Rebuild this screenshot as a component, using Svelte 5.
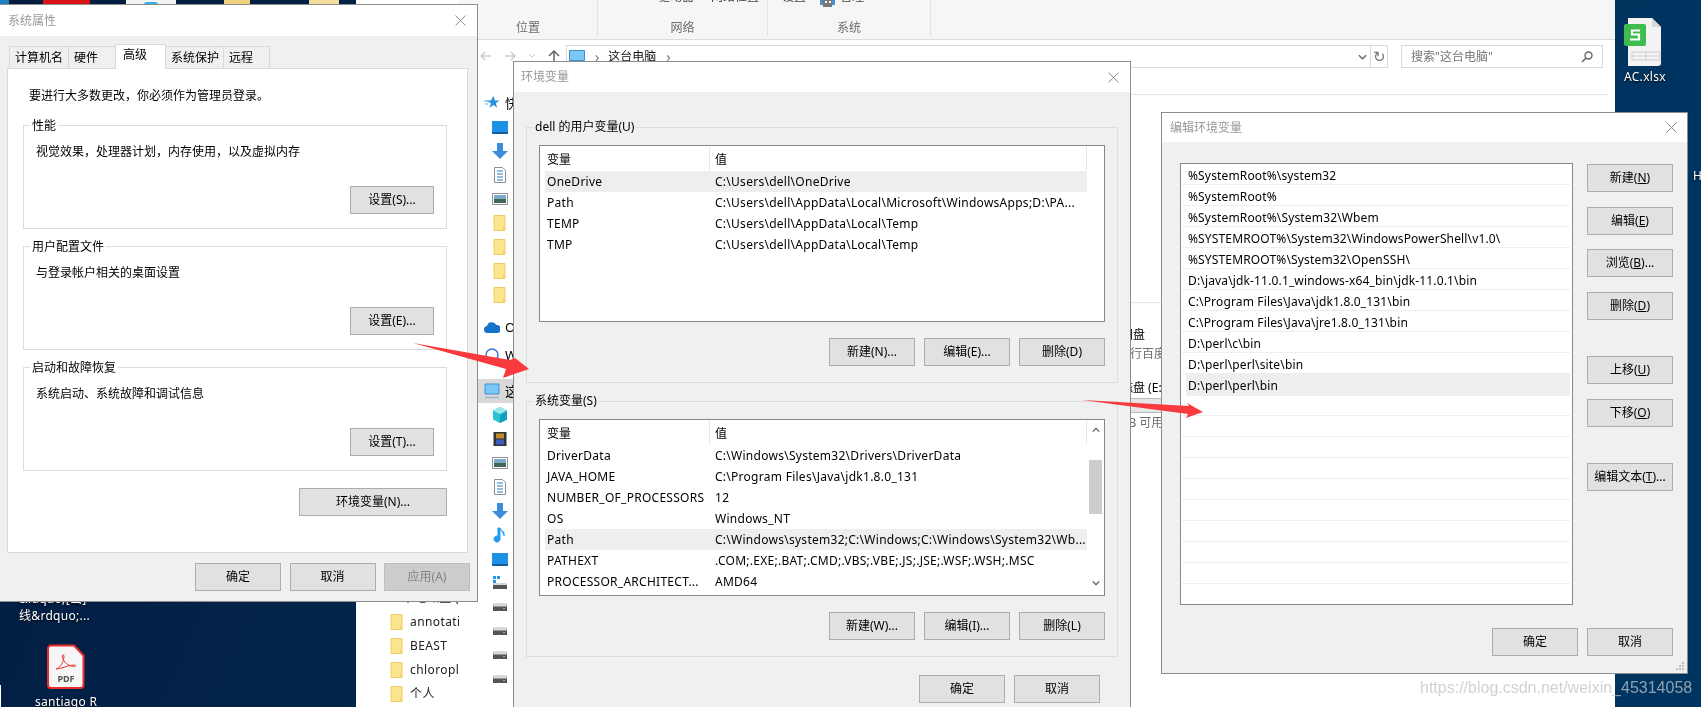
<script>
  const tabs = ['计算机名', '硬件', '高级', '系统保护', '远程'];
  const groups = [
    { legend: '性能', text: '视觉效果，处理器计划，内存使用，以及虚拟内存', btn: '设置(S)...' },
    { legend: '用户配置文件', text: '与登录帐户相关的桌面设置', btn: '设置(E)...' },
    { legend: '启动和故障恢复', text: '系统启动、系统故障和调试信息', btn: '设置(T)...' }
  ];
  const userVars = [
    ['OneDrive', 'C:\\Users\\dell\\OneDrive', true],
    ['Path', 'C:\\Users\\dell\\AppData\\Local\\Microsoft\\WindowsApps;D:\\PA...'],
    ['TEMP', 'C:\\Users\\dell\\AppData\\Local\\Temp'],
    ['TMP', 'C:\\Users\\dell\\AppData\\Local\\Temp']
  ];
  const sysVars = [
    ['DriverData', 'C:\\Windows\\System32\\Drivers\\DriverData'],
    ['JAVA_HOME', 'C:\\Program Files\\Java\\jdk1.8.0_131'],
    ['NUMBER_OF_PROCESSORS', '12'],
    ['OS', 'Windows_NT'],
    ['Path', 'C:\\Windows\\system32;C:\\Windows;C:\\Windows\\System32\\Wb...', true],
    ['PATHEXT', '.COM;.EXE;.BAT;.CMD;.VBS;.VBE;.JS;.JSE;.WSF;.WSH;.MSC'],
    ['PROCESSOR_ARCHITECT...', 'AMD64']
  ];
  const paths = [
    '%SystemRoot%\\system32', '%SystemRoot%', '%SystemRoot%\\System32\\Wbem',
    '%SYSTEMROOT%\\System32\\WindowsPowerShell\\v1.0\\', '%SYSTEMROOT%\\System32\\OpenSSH\\',
    'D:\\java\\jdk-11.0.1_windows-x64_bin\\jdk-11.0.1\\bin', 'C:\\Program Files\\Java\\jdk1.8.0_131\\bin',
    'C:\\Program Files\\Java\\jre1.8.0_131\\bin', 'D:\\perl\\c\\bin', 'D:\\perl\\perl\\site\\bin', 'D:\\perl\\perl\\bin',
    '', '', '', '', '', '', '', '', '', ''
  ];
  const editBtns = [
    { t: '新建(', k: 'N', e: ')', c: '' }, { t: '编辑(', k: 'E', e: ')', c: '' },
    { t: '浏览(', k: 'B', e: ')...', c: '' }, { t: '删除(', k: 'D', e: ')', c: '' },
    { t: '上移(', k: 'U', e: ')', c: 'far' }, { t: '下移(', k: 'O', e: ')', c: '' },
    { t: '编辑文本(', k: 'T', e: ')...', c: 'far2' }
  ];
  const side = [
    ['star', '快', 1], ['monitor2', '', 0], ['down', '', 0], ['doc', '', 0], ['image', '', 0],
    ['folder', '', 0], ['folder', '', 0], ['folder', '', 0], ['folder', '', 0],
    ['cloud', 'O', 1, 'gap8'], ['search', 'W', 1, 'gap4'], ['monitor', '这', 1, 'gap12 sel'],
    ['cube', '', 0], ['film', '', 0], ['image', '', 0], ['doc', '', 0], ['down', '', 0], ['note', '', 0],
    ['monitor2', '', 0], ['windrive', '', 0], ['drive', '', 0], ['drive', '', 0], ['drive', '', 0], ['drive', '', 0]
  ];
  const backFolders = ['annotation', 'BEAST', 'chloroplast', '个人'];
</script>

{#snippet close()}
  <svg class="x" viewBox="0 0 11 11"><path d="M.5.5l10 10M10.5.5l-10 10" stroke="#8c8c8c" fill="none"/></svg>
{/snippet}

{#snippet folder()}
  <svg class="ic" viewBox="0 0 16 16"><path d="M2 .5h11v15H2z" fill="#fde58f" stroke="#eecb62"/><path d="M11 11h2v4h-2z" fill="#f4d06f"/></svg>
{/snippet}

{#snippet icon(k)}
  <svg class="ic" viewBox="0 0 16 16">
    {#if k === 'star'}
      <path d="M9.5 1l1.4 4.4 4.6.1-3.700 2.700 1.400 4.500-3.800-2.700-4 3 1.600-4.700L2 5.500h4.800z" fill="#2a8fdc"/><path d="M0 6h4M1 9h3" stroke="#56b4ee"/>
    {:else if k === 'monitor'}
      <path d="M1 1h14v10H1z" fill="#7cc8f4" stroke="#3f8fcc"/><path d="M1 14.500h14" stroke="#9ab8d0" stroke-width="1.500"/>
    {:else if k === 'monitor2'}
      <path d="M0 2h16v11H0z" fill="#1e90e8"/><path d="M0 13h16v2H0z" fill="#14609e"/>
    {:else if k === 'down'}
      <path d="M5 0h6v8h5l-8 8-8-8h5z" fill="#3c8bdc"/>
    {:else if k === 'doc'}
      <path d="M2.500.5h8l3 3v12h-11z" fill="#fff" stroke="#8f8f8f"/><path d="M5 4h6M5 7h6M5 10h6M5 13h6" stroke="#2b7fc2"/>
    {:else if k === 'image'}
      <path d="M.5 2.500h15v11H.5z" fill="#fff" stroke="#8f8f8f"/><path d="M2 4h12v4H2z" fill="#7da9c9"/><path d="M2 8h12v4H2z" fill="#3e6b57"/>
    {:else if k === 'cloud'}
      <path d="M4 14a3.500 3.500 0 0 1-1-7 5 5 0 0 1 9.300-1A4 4 0 0 1 13 14z" fill="#1473c9"/>
    {:else if k === 'search'}
      <circle cx="8" cy="8" r="6" fill="none" stroke="#3c78d8" stroke-width="1.500"/>
    {:else if k === 'cube'}
      <path d="M8 0l7 3.500v9L8 16l-7-3.500v-9z" fill="#29c4d4"/><path d="M8 8l7-4.500v9L8 16z" fill="#0f9fb8"/><path d="M8 0l7 3.500L8 7 1 3.500z" fill="#9ae8ee"/>
    {:else if k === 'film'}
      <path d="M1.500 1h13v14h-13z" fill="#333"/><path d="M4 2.500h8v5H4z" fill="#c08a2a"/><path d="M4 8.500h8v5H4z" fill="#3a5ec0"/>
    {:else if k === 'note'}
      <path d="M8 1v11a3 3 0 1 1-2-2.800V1zM8 1c1 3 5 3 4 8" fill="#1d9bf0" stroke="#1d9bf0"/>
    {:else if k === 'windrive'}
      <path d="M1 1h3v3H1zM5 1h3v3H5zM1 5h3v3H1z" fill="#1e9be8"/><path d="M2 8h12l1 3v3H1v-3z" fill="#555"/><path d="M2 8h12l.6 2H1.400z" fill="#d8d8d8"/>
    {:else}
      <path d="M2 4h12l1 4v4H1V8z" fill="#555"/><path d="M2 4h12l.8 3.500H1.200z" fill="#d8d8d8"/><path d="M11 9.500h2" stroke="#5fd35f"/>
    {/if}
  </svg>
{/snippet}

{#snippet varTable(rows, scroll)}
  <div class="table">
    <div class="cols">
      <div class="head">
        <div class="hcell first">变量</div>
        <div class="hcell second">值</div>
      </div>
      {#each rows as r}
        <div class="row" class:sel={r[2]}>
          <div class="name">{r[0]}</div>
          <div class="val">{r[1]}</div>
        </div>
      {/each}
    </div>
    {#if scroll}
      <div class="scrollbar">
        <svg viewBox="0 0 10 6"><path d="M1 5l4-4 4 4" fill="none" stroke="#555" stroke-width="1.500"/></svg>
        <div class="thumb"></div>
        <svg class="dn" viewBox="0 0 10 6"><path d="M1 1l4 4 4-4" fill="none" stroke="#555" stroke-width="1.500"/></svg>
      </div>
    {/if}
  </div>
{/snippet}

<div class="desktop">
  <div class="peek blue"></div>
  <div class="peek red"></div>
  <div class="peek pale"><i></i></div>
  <div class="peek yel"></div>
  <div class="peek yel2"></div>

  <div class="dlabel wire"><div>&amp;ldquo;[出]</div><div>线&amp;rdquo;...</div></div>
  <svg class="pdf" viewBox="0 0 38 46">
    <path d="M4 1.500h23l9.500 10V41a3 3 0 0 1-3 3H4a3 3 0 0 1-3-3V4.500a3 3 0 0 1 3-3z" fill="#f6f6f6" stroke="#ec2c2c" stroke-width="2"/>
    <path d="M9 25c4-1 7-6 8-12 0-3-2-3-1.500 0 1 5 5 9 12 9.500 2 0 1.500-2-1-1.500-6 .5-13 4-17.500 4z" fill="none" stroke="#e8343a" stroke-width="1"/>
    <text x="19" y="38" text-anchor="middle" class="pdft">PDF</text>
  </svg>
  <div class="dlabel santi">santiago R</div>
  <div class="whitebit"></div>

  <svg class="xls" viewBox="0 0 38 48">
    <path d="M4 0h24l9 9v36a3 3 0 0 1-3 3H4z" fill="#f3f3f3"/>
    <path d="M28 0l9 9h-9z" fill="#d8d8d8"/>
    <rect x="0" y="6" width="22" height="22" rx="2" fill="#3ebd4e"/>
    <path d="M16 12.500H8v4h7v5H6" fill="none" stroke="#fff" stroke-width="2.200"/>
    <path d="M8 34h28v8H8zM8 38h28M22 34v8" fill="none" stroke="#cfcfcf"/>
  </svg>
  <div class="dlabel acx">AC.xlsx</div>
  <div class="dlabel hh">H</div>

  <div class="win-back">
    <div class="back-top"><span>固定到快速</span><span>复制</span></div>
    <div class="back-list">
      <div class="back-row"><span class="bdrive">{@render icon('drive')}</span>本地磁盘 (D:)</div>
      {#each backFolders as f}
        <div class="back-row sub">{@render folder()}<span>{f}</span></div>
      {/each}
    </div>
  </div>

  <div class="explorer">
    <div class="ribbon">
      <div class="rgroup g1"><span class="rlab">位置</span></div>
      <div class="rgroup g2">
        <div class="rtop"><span>驱动器</span><span>网络位置</span></div>
        <span class="rlab">网络</span>
      </div>
      <div class="rgroup g3">
        <div class="rtop"><span>设置</span>
          <svg class="mgr" viewBox="0 0 15 8"><path d="M0 0h15v5H0z" fill="#4a90c8"/><path d="M3 0h9v7H3z" fill="#777"/><path d="M5 1h2v2H5zM9 1h2v2H9z" fill="#fff"/></svg>
          <span>管理</span></div>
        <span class="rlab">系统</span>
      </div>
    </div>
    <div class="nav">
      <div class="navarrows">
        <svg viewBox="0 0 12 12" class="na"><path d="M11 6H1M5 2L1 6l4 4" fill="none" stroke="#ccc" stroke-width="1.500"/></svg>
        <svg viewBox="0 0 12 12" class="na"><path d="M1 6h10M7 2l4 4-4 4" fill="none" stroke="#ccc" stroke-width="1.500"/></svg>
        <svg viewBox="0 0 8 8" class="nb"><path d="M1 2l3 3 3-3" fill="none" stroke="#ccc"/></svg>
        <svg viewBox="0 0 12 12" class="na"><path d="M6 12V1M1 6l5-5 5 5" fill="none" stroke="#666" stroke-width="1.500"/></svg>
      </div>
      <div class="addr">
        <svg class="amon" viewBox="0 0 16 14"><path d="M.5.5h15v10H.5z" fill="#7cc8f4" stroke="#3f8fcc"/><path d="M5 13h6" stroke="#6a9cc0"/></svg>
        <span class="chev">›</span><span class="crumb">这台电脑</span><span class="chev">›</span>
        <span class="grow"></span>
        <svg class="dd" viewBox="0 0 10 6"><path d="M1 1l4 4 4-4" fill="none" stroke="#666" stroke-width="1.500"/></svg>
        <span class="refresh">↻</span>
      </div>
      <div class="search">
        <span>搜索"这台电脑"</span>
        <svg viewBox="0 0 12 12"><circle cx="7.500" cy="4.500" r="3.500" fill="none" stroke="#666" stroke-width="1.400"/><path d="M5 7l-4 4" stroke="#666" stroke-width="1.600"/></svg>
      </div>
    </div>
    <div class="ebody">
      <div class="sidebar">
        {#each side as s}
          <div class="srow {s[3] || ''}" class:top={s[2]}>
            {#if s[0] === 'folder'}{@render folder()}{:else}{@render icon(s[0])}{/if}
            {#if s[1]}<span>{s[1]}</span>{/if}
          </div>
        {/each}
      </div>
      <div class="emain">
        <div class="rule r1"></div>
        <div class="drives">
          <div class="rule"></div>
          <div class="dname">百度网盘</div>
          <div class="dsub">双击运行百度网盘</div>
          <div class="dname second">本地磁盘 (E:)</div>
          <div class="dbar"></div>
          <div class="dfree">200 GB 可用</div>
        </div>
      </div>
    </div>
  </div>

  <!-- 系统属性 -->
  <section class="dialog sys">
    <header class="title"><span>系统属性</span>{@render close()}</header>
    <div class="tabs">
      {#each tabs as t, i}
        <div class="tab t{i}" class:active={i === 2}>{t}</div>
      {/each}
    </div>
    <div class="panel">
      <p class="notice">要进行大多数更改，你必须作为管理员登录。</p>
      {#each groups as g}
        <div class="group white">
          <span class="legend">{g.legend}</span>
          <p>{g.text}</p>
          <button class="btn setting">{g.btn}</button>
        </div>
      {/each}
      <button class="btn envbtn">环境变量(N)...</button>
    </div>
    <div class="foot sysfoot">
      <button class="btn">确定</button>
      <button class="btn">取消</button>
      <button class="btn off">应用(A)</button>
    </div>
  </section>

  <!-- 环境变量 -->
  <section class="dialog env">
    <header class="title"><span>环境变量</span>{@render close()}</header>
    <div class="envbody">
      <div class="group eg g-user">
        <span class="legend">dell 的用户变量(U)</span>
        {@render varTable(userVars, false)}
        <div class="btnrow">
          <button class="btn">新建(N)...</button>
          <button class="btn">编辑(E)...</button>
          <button class="btn">删除(D)</button>
        </div>
      </div>
      <div class="group eg g-sys">
        <span class="legend">系统变量(S)</span>
        {@render varTable(sysVars, true)}
        <div class="btnrow">
          <button class="btn">新建(W)...</button>
          <button class="btn">编辑(I)...</button>
          <button class="btn">删除(L)</button>
        </div>
      </div>
      <div class="foot envfoot">
        <button class="btn">确定</button>
        <button class="btn">取消</button>
      </div>
    </div>
  </section>

  <!-- 编辑环境变量 -->
  <section class="dialog edit">
    <header class="title"><span>编辑环境变量</span>{@render close()}</header>
    <div class="editmain">
      <div class="plist">
        {#each paths as p, i}
          <div class="prow" class:sel={i === 10}><span>{p}</span></div>
        {/each}
      </div>
      <div class="ebtns">
        {#each editBtns as b}
          <button class="btn {b.c}">{b.t}<u>{b.k}</u>{b.e}</button>
        {/each}
      </div>
    </div>
    <div class="foot editfoot">
      <button class="btn">确定</button>
      <button class="btn">取消</button>
    </div>
    <svg class="grip" viewBox="0 0 8 8"><path d="M6 0h2v2H6zM3 3h2v2H3zM6 3h2v2H6zM0 6h2v2H0zM3 6h2v2H3zM6 6h2v2H6z" fill="#bdbdbd"/></svg>
  </section>

  <svg class="arrows" viewBox="0 0 1701 707">
    <polygon points="413,343 510,360 515,358 529,369 503,378 506,369" fill="#f83a3e"/>
    <polygon points="1082,400 1189,406 1187,403 1203,412 1186,418 1188,414" fill="#f83a3e"/>
  </svg>

  <div class="watermark">https://blog.csdn.net/weixin_45314058</div>
</div>

<style>
  :global(body) { margin: 0; overflow: hidden; }
  * { box-sizing: border-box; }
  .desktop {
    position: relative; width: 1701px; height: 707px; overflow: hidden;
    background: linear-gradient(115deg, #021b3c 0%, #03244b 30%, #003460 85%);
    font: 12px/16px "Noto Sans", "Noto Sans CJK SC", sans-serif; color: #000;
    filter: blur(.3px);
  }
  p { margin: 0; }

  .peek { position: absolute; top: 0; height: 5px; }
  .blue { left: 0; width: 9px; background: #1d7fc4; }
  .red { left: 43px; width: 47px; background: #d91414; }
  .pale { left: 126px; width: 50px; background: #f4f4f4; }
  .pale i { display: block; margin: 2px auto 0; width: 14px; height: 3px; background: #2fb3e0; border-radius: 7px 7px 0 0; }
  .yel { left: 224px; width: 26px; background: #efd27e; }
  .yel2 { left: 309px; width: 30px; background: #f3dc9c; }

  .dlabel { position: absolute; color: #fff; text-shadow: 0 1px 2px #000; white-space: nowrap; letter-spacing: .3px; }
  .wire { left: 19px; top: 590px; line-height: 17px; }
  .santi { left: 35px; top: 694px; }
  .acx { left: 1624px; top: 69px; }
  .hh { left: 1693px; top: 168px; }
  .pdf { position: absolute; left: 47px; top: 644px; width: 38px; height: 46px; }
  .pdft { font: bold 9px "Noto Sans", sans-serif; fill: #555; }
  .whitebit { position: absolute; left: 0; top: 685px; width: 1px; height: 22px; background: #fff; }
  .xls { position: absolute; left: 1624px; top: 18px; width: 38px; height: 48px; }

  .win-back {
    position: absolute; left: 356px; top: 0; width: 104px; height: 707px; background: #fff;
    border-right: 1px solid #a0a0a0; display: flex; flex-direction: column; justify-content: space-between;
    overflow: hidden;
  }
  .back-top { display: flex; gap: 6px; padding-left: 8px; margin-top: -13px; color: #555; white-space: nowrap; }
  .back-list { padding-bottom: 1px; }
  .back-row { height: 24px; display: flex; align-items: center; gap: 5px; white-space: nowrap; padding-left: 25px; color: #222; letter-spacing: .4px; }
  .back-row.sub { padding-left: 33px; }
  .bdrive { display: flex; }

  .explorer {
    position: absolute; left: 459px; top: 0; width: 1156px; height: 707px; background: #fff;
    display: flex; flex-direction: column;
  }
  .ribbon { height: 40px; background: #f5f6f7; border-bottom: 1px solid #dadbdc; display: flex; flex: none; }
  .rgroup { position: relative; border-right: 1px solid #e2e3e4; height: 36px; display: flex; flex-direction: column; align-items: center; justify-content: flex-end; color: #6d6d6d; overflow: hidden; }
  .g1 { width: 139px; }
  .g2 { width: 170px; }
  .g3 { width: 163px; }
  .rlab { line-height: 16px; }
  .rtop { position: absolute; top: -11px; left: 60px; display: flex; gap: 17px; color: #444; white-space: nowrap; }
  .g3 .rtop { left: 14px; gap: 14px; }
  .mgr { width: 15px; height: 8px; margin: 11px 5px 0 0; flex: none; }
  .g3 .rtop .mgr { margin-right: -9px; }
  .nav { height: 51px; display: flex; align-items: flex-start; padding-top: 5px; flex: none; }
  .navarrows { width: 107px; height: 22px; display: flex; align-items: center; gap: 12px; padding-left: 21px; }
  .na { width: 12px; height: 12px; }
  .nb { width: 8px; height: 8px; }
  .addr { width: 822px; height: 23px; border: 1px solid #d9d9d9; display: flex; align-items: center; padding-left: 2px; }
  .amon { width: 16px; height: 14px; }
  .chev { color: #777; margin: 0 9px 0 10px; font-size: 14px; }
  .crumb { color: #111; }
  .grow { flex: 1; }
  .dd { width: 9px; height: 6px; margin-right: 3px; }
  .refresh { width: 17px; border-left: 1px solid #d9d9d9; height: 21px; text-align: center; font-size: 15px; line-height: 20px; color: #777; }
  .search { width: 202px; height: 23px; margin-left: 13px; border: 1px solid #d9d9d9; display: flex; align-items: center; justify-content: space-between; padding: 0 9px 0 9px; color: #777; }
  .search svg { width: 12px; height: 12px; }

  .ebody { flex: 1; display: flex; min-height: 0; }
  .sidebar { width: 55px; flex: none; overflow: hidden; }
  .srow { height: 24px; display: flex; align-items: center; padding-left: 33px; gap: 5px; white-space: nowrap; overflow: hidden; }
  .srow.top { padding-left: 25px; }
  .srow span { font-size: 13px; }
  .gap8 { margin-top: 8px; }
  .gap4 { margin-top: 4px; }
  .gap12 { margin-top: 12px; }
  .sel.srow { background: #d9d9d9; }
  .ic { width: 16px; height: 16px; flex: none; }

  .emain { flex: 1; display: flex; flex-direction: column; }
  .rule { height: 1px; background: #e5e5e5; }
  .r1 { width: 1094px; margin-top: 3px; }
  .drives { margin-top: 207px; margin-left: 583px; width: 100px; white-space: nowrap; }
  .dname { margin-top: 24px; margin-left: 0; }
  .drives .rule { width: 80px; }
  .dsub { margin-top: 3px; margin-left: -3px; color: #6d6d6d; }
  .dname.second { margin-left: 0; margin-top: 18px; }
  .dbar { height: 15px; margin-top: 2px; background: #e6e6e6; border: 1px solid #bcbcbc; }
  .dfree { margin-top: 2px; margin-left: -1px; color: #6d6d6d; }

  .dialog { position: absolute; background: #f0f0f0; border: 1px solid #8d8d8d; display: flex; flex-direction: column; }
  .title { height: 30px; flex: none; background: #fff; display: flex; align-items: center; justify-content: space-between; padding: 0 11px 0 7px; color: #999; }
  .x { width: 11px; height: 11px; }

  .sys { left: -1px; top: 4px; width: 479px; height: 598px; }
  .sys .title { height: 31px; padding-left: 8px; }
  .tabs { display: flex; align-items: flex-end; height: 33px; padding-left: 9px; margin-bottom: -1px; position: relative; z-index: 1; flex: none; }
  .tab { height: 23px; background: #f0f0f0; border: 1px solid #d9d9d9; border-right: 0; padding-left: 5px; line-height: 22px; white-space: nowrap; }
  .t0 { width: 59px; } .t1 { width: 47px; } .t2 { width: 51px; } .t3 { width: 58px; } .t4 { width: 47px; border-right: 1px solid #d9d9d9; }
  .tab.active { height: 25px; background: #fff; border-bottom: 0; border-right: 1px solid #d9d9d9; padding-left: 7px; line-height: 20px; margin-right: -1px; position: relative; }
  .panel { margin-left: 7px; width: 461px; height: 485px; background: #fff; border: 1px solid #d9d9d9; padding: 0 20px 0 15px; flex: none; display: flex; flex-direction: column; }
  .notice { margin: 19px 0 21px 6px; }
  .group { position: relative; border: 1px solid #dcdcdc; display: flex; flex-direction: column; }
  .white { height: 104px; margin-bottom: 17px; padding: 18px 12px 14px 12px; }
  .legend { position: absolute; left: 6px; top: -9px; padding: 0 2px; background: #f0f0f0; white-space: nowrap; line-height: 16px; }
  .white .legend { background: #fff; top: -8px; }
  .btn { width: 86px; height: 28px; background: #e1e1e1; border: 1px solid #adadad; border-radius: 0; padding: 0; font: inherit; color: #000; white-space: nowrap; flex: none; }
  .setting { width: 84px; margin-top: auto; align-self: flex-end; }
  .envbtn { width: 148px; align-self: flex-end; }
  .foot { display: flex; justify-content: flex-end; }
  .sysfoot { gap: 8.500px; margin-top: 10px; padding-right: 7px; }
  .off { background: #ccc; border-color: #bfbfbf; color: #838383; }

  .env { left: 513px; top: 61px; width: 618px; height: 670px; }
  .envbody { padding: 35px 12px 0; display: flex; flex-direction: column; }
  .eg { padding: 17px 12px 0; }
  .g-user { height: 256px; margin-bottom: 18px; }
  .g-sys { height: 256px; }
  .table { height: 177px; border: 1px solid #828790; background: #fff; display: flex; }
  .cols { width: 547px; padding-left: 5px; flex: none; }
  .head { height: 25px; display: grid; grid-template-columns: 164px 1fr; }
  .hcell { padding-left: 2px; line-height: 26px; margin-top: 1px; height: 23px; }
  .hcell.second { border-left: 1px solid #e5e5e5; border-right: 1px solid #e5e5e5; padding-left: 5px; }
  .row { height: 21px; display: grid; grid-template-columns: 164px 1fr; line-height: 21px; white-space: nowrap; letter-spacing: .27px; }
  .row.sel { background: #eee; }
  .name { padding-left: 2px; overflow: hidden; }
  .val { padding-left: 6px; overflow: hidden; }
  .scrollbar { flex: 1; padding: 0 2px; display: flex; flex-direction: column; align-items: stretch; }
  .scrollbar svg { width: 8px; height: 6px; margin: 7px auto 0; flex: none; }
  .thumb { height: 54px; margin-top: 27px; background: #cdcdcd; }
  .scrollbar svg.dn { margin-top: 66px; }
  .btnrow { display: flex; justify-content: flex-end; gap: 9px; margin-top: 16px; }
  .envfoot { gap: 9px; margin-top: 18px; padding-right: 18px; }

  .edit { left: 1161px; top: 112px; width: 527px; height: 562px; }
  .edit .title { height: 29px; padding-left: 8px; padding-right: 10px; }
  .editmain { display: flex; padding: 21px 14px 0 18px; gap: 14px; }
  .plist { width: 393px; height: 442px; flex: none; background: #fff; border: 1px solid #828790; overflow: hidden; padding-right: 2px; }
  .prow { height: 21px; border-bottom: 1px solid #eee; margin-left: 1px; padding: 2px 0 0 6px; line-height: 20px; white-space: nowrap; letter-spacing: .15px; }
  .prow.sel { margin-left: 5px; padding-left: 2px; background: #eee; height: 22px; margin-bottom: -1px; }
  .ebtns { display: flex; flex-direction: column; gap: 14.700px; padding-top: 1px; }
  .far { margin-top: 21.300px; }
  .far2 { margin-top: 21.300px; }
  .editfoot { gap: 9px; padding-right: 14px; margin-top: 23px; }
  .grip { position: absolute; right: 3px; bottom: 3px; width: 8px; height: 8px; }

  .arrows { position: absolute; left: 0; top: 0; width: 1701px; height: 707px; pointer-events: none; }
  .watermark { position: absolute; left: 1420px; top: 678px; font: 16px/20px "Liberation Sans", sans-serif; color: rgba(190, 195, 200, .75); white-space: nowrap; }
</style>
